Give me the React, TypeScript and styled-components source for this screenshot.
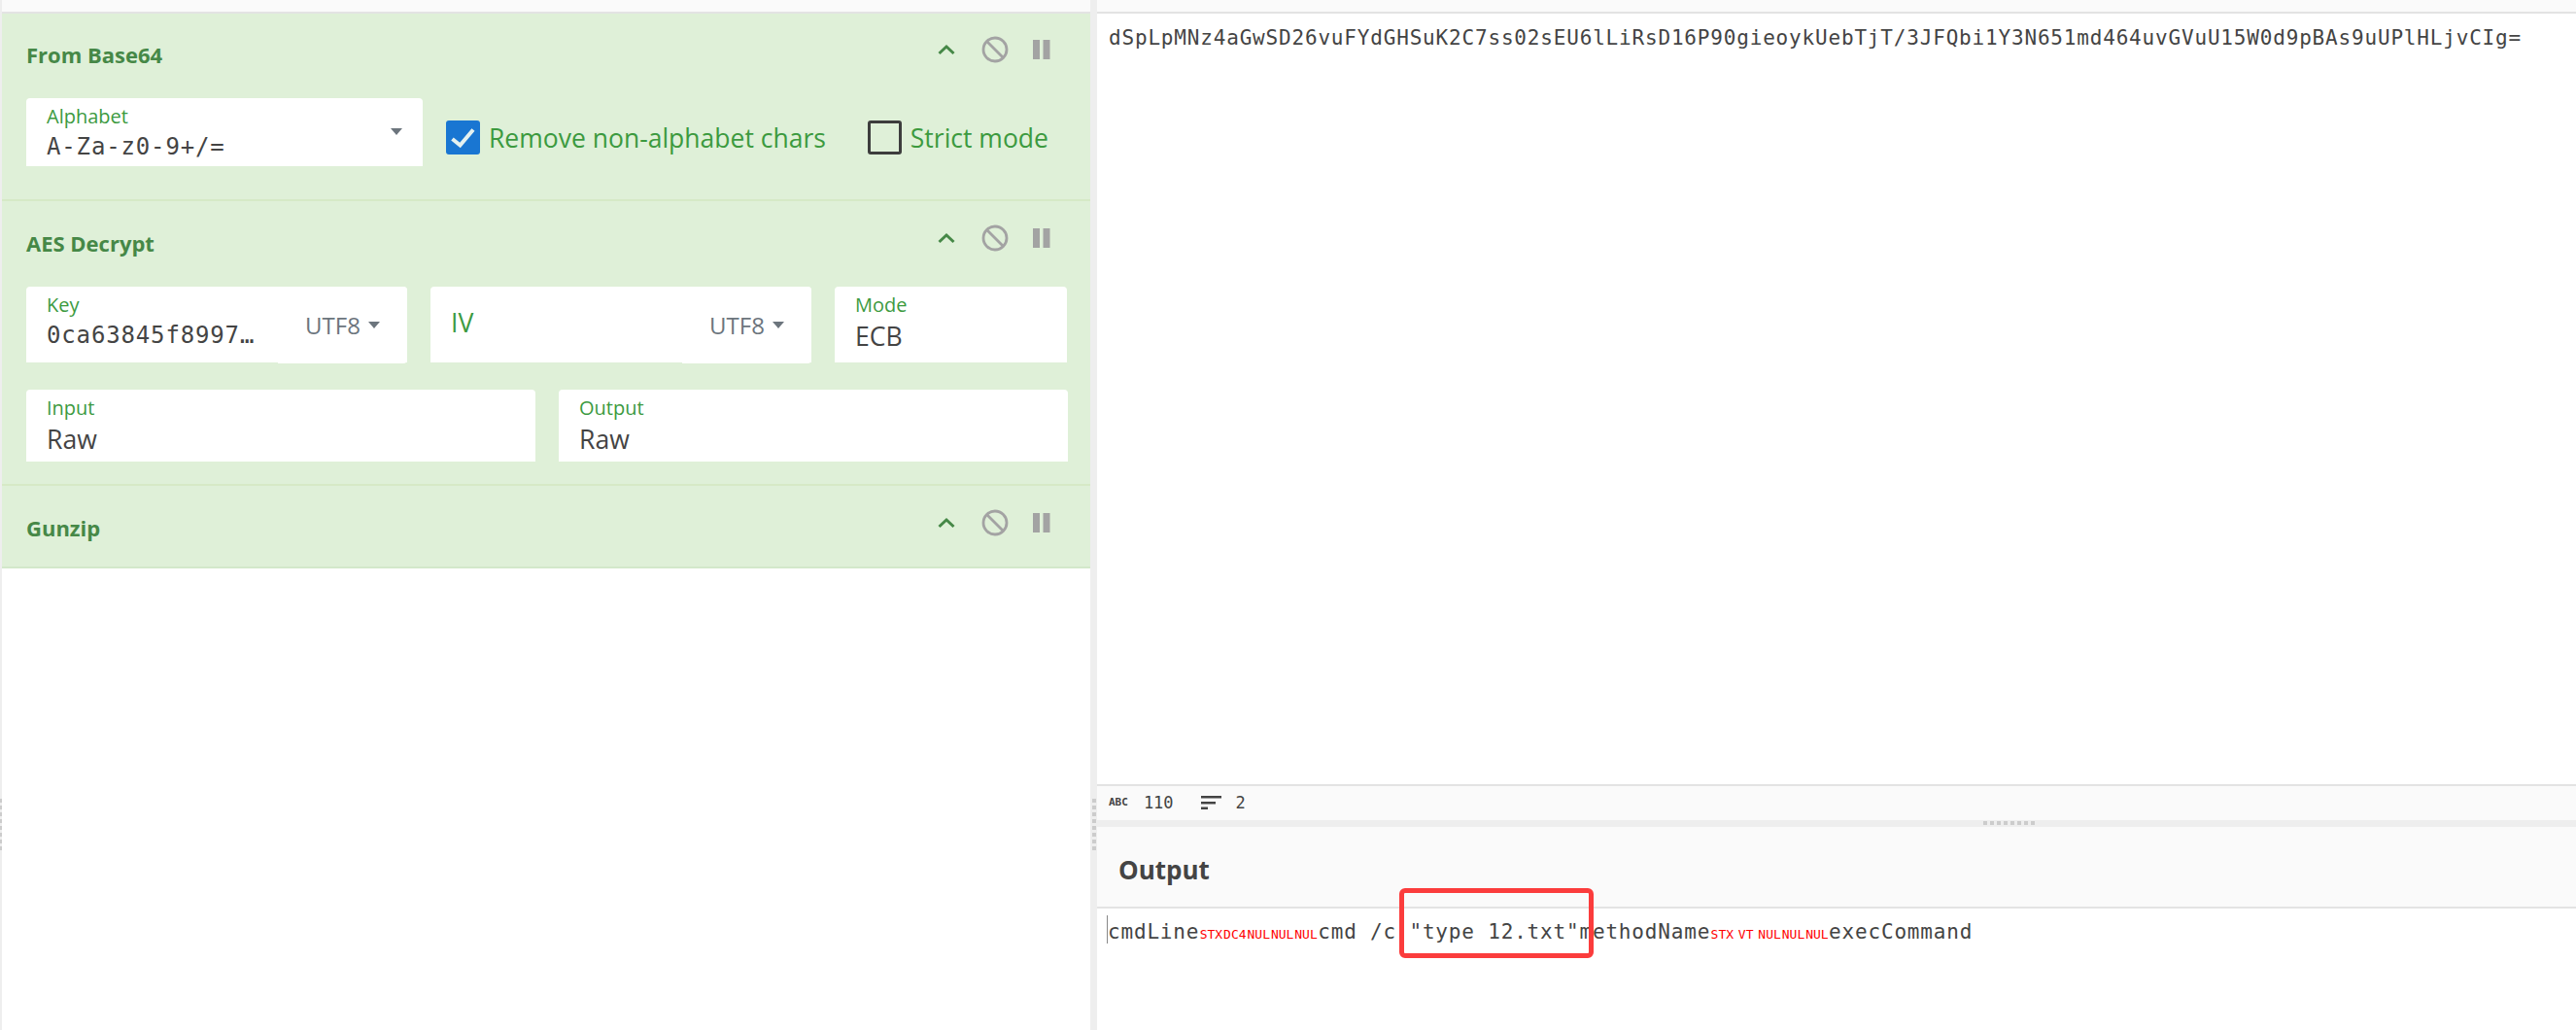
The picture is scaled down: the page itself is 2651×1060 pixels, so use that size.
import React from "react";
import styled, { createGlobalStyle } from "styled-components";

const GlobalStyle = createGlobalStyle`
  html, body {
    margin: 0;
    padding: 0;
    background: #fff;
    overflow: hidden;
  }
  * {
    box-sizing: border-box;
  }
`;

const green = "#468847";
const labelGreen = "#3c9a3f";
const ink = "#444";
const sans = `"Open Sans", "Noto Sans", sans-serif`;
const mono = `"DejaVu Sans Mono", "Liberation Mono", monospace`;

const Page = styled.div`
  position: relative;
  width: 2651px;
  height: 1060px;
  display: flex;
  font-family: ${sans};
  color: ${ink};
  overflow: hidden;
`;

const EdgeGutter = styled.div`
  position: relative;
  width: 2px;
  flex: none;
  background: #eee;
`;

const RecipePane = styled.div`
  width: 1120px;
  flex: none;
  display: flex;
  flex-direction: column;
`;

const TopStrip = styled.div`
  height: 14px;
  flex: none;
  background: #fafafa;
  border-bottom: 2px solid #e3e3e3;
`;

const Operation = styled.section<{ $h: number; $last?: boolean }>`
  height: ${(p) => p.$h}px;
  flex: none;
  padding: 0 23px 0 25px;
  background: #dff0d8;
  border-bottom: 2px solid ${(p) => (p.$last ? "#d3e8ca" : "#d6e9c6")};
`;

const OpHeader = styled.div<{ $first?: boolean }>`
  height: ${(p) => (p.$first ? 87 : 88)}px;
  margin-top: 0;
  display: flex;
  align-items: flex-start;
  justify-content: space-between;
`;

const OpTitle = styled.h3<{ $first?: boolean }>`
  margin: ${(p) => (p.$first ? 27 : 28)}px 0 0;
  font-size: 22px;
  line-height: 30px;
  font-weight: 700;
  color: ${green};
`;

const OpControls = styled.div<{ $first?: boolean }>`
  display: flex;
  align-items: center;
  justify-content: space-between;
  width: 117px;
  height: 30px;
  margin: ${(p) => (p.$first ? 22 : 23)}px 18px 0 0;
`;

const Row = styled.div<{ $mb?: number }>`
  display: flex;
  align-items: center;
  gap: 24px;
  margin-bottom: ${(p) => p.$mb ?? 0}px;
`;

const Field = styled.div<{ $w: number; $h: number }>`
  position: relative;
  width: ${(p) => p.$w}px;
  height: ${(p) => p.$h}px;
  flex: none;
  background: #fff;
  border-radius: 4px 4px 0 0;
  padding: 7px 21px 0;
`;

const FieldLabel = styled.div`
  font-size: 20px;
  line-height: 24px;
  color: ${labelGreen};
`;

const FieldValue = styled.div<{ $mono?: boolean }>`
  margin-top: ${(p) => (p.$mono ? 3 : 4)}px;
  font-family: ${(p) => (p.$mono ? mono : sans)};
  font-size: ${(p) => (p.$mono ? 24 : 26.6)}px;
  letter-spacing: ${(p) => (p.$mono ? 0.85 : 0)}px;
  line-height: 32px;
  color: ${ink};
  white-space: nowrap;
`;

const BigLabel = styled.div`
  font-size: 26.6px;
  line-height: 32px;
  margin-top: 14px;
  color: ${labelGreen};
`;

const Caret = styled.span`
  display: inline-block;
  border-top: 7px solid #6c757d;
  border-left: 6.5px solid transparent;
  border-right: 6.5px solid transparent;
`;

const SelectCaret = styled(Caret)`
  position: absolute;
  right: 21px;
  top: 31px;
`;

const Encoding = styled.div`
  position: absolute;
  right: 0;
  top: 0;
  bottom: -1px;
  width: 133px;
  background: #fff;
  border-radius: 0 4px 4px 0;
  display: flex;
  align-items: center;
  justify-content: center;
  gap: 8px;
  font-size: 24px;
  color: #6c757d;
`;

const CheckGroup = styled.label<{ $ml?: number }>`
  display: flex;
  align-items: center;
  gap: 9px;
  padding-top: 11px;
  margin-left: ${(p) => p.$ml ?? 0}px;
  font-size: 26.5px;
  color: ${labelGreen};
  white-space: nowrap;
`;

const CheckBox = styled.span<{ $on?: boolean }>`
  width: 35px;
  height: 35px;
  flex: none;
  display: flex;
  border-radius: 3px;
  background: ${(p) => (p.$on ? "#1976d2" : "transparent")};
  border: ${(p) => (p.$on ? "none" : "3px solid #3d3d3d")};
`;

const Gutter = styled.div`
  position: relative;
  width: 7px;
  flex: none;
  background: #eee;
`;

const MainPane = styled.div`
  flex: 1;
  display: flex;
  flex-direction: column;
  min-width: 0;
`;

const InputBody = styled.div`
  height: 793px;
  flex: none;
  padding: 12px 12px;
  font-family: ${mono};
  font-size: 21px;
  letter-spacing: 0.82px;
  line-height: 26px;
  color: ${ink};
  white-space: nowrap;
`;

const StatusBar = styled.div`
  height: 37px;
  flex: none;
  display: flex;
  align-items: center;
  padding: 0 0 2px 12px;
  background: #fafafa;
  border-top: 2px solid #e3e3e3;
  font-family: ${mono};
  font-size: 17px;
  color: ${ink};
`;

const StatGroup = styled.span<{ $gap: number; $mr?: number }>`
  display: flex;
  align-items: center;
  gap: ${(p) => p.$gap}px;
  margin-right: ${(p) => p.$mr ?? 0}px;
`;

const AbcMark = styled.span`
  font-size: 11px;
  font-weight: 700;
`;

const HSplit = styled.div`
  position: relative;
  height: 7px;
  flex: none;
  background: #eee;
`;

const Grip = styled.div<{ $w?: number }>`
  position: absolute;
  left: ${(p) => (p.$w === 2 ? 0 : 2)}px;
  top: 822px;
  width: ${(p) => p.$w ?? 4}px;
  height: 56px;
  background: repeating-linear-gradient(to bottom, #ccc 0 4px, transparent 4px 7px);
`;

const SplitGrip = styled.div`
  position: absolute;
  left: 912px;
  top: 1px;
  width: 54px;
  height: 4px;
  background: repeating-linear-gradient(to right, #ccc 0 4px, transparent 4px 7px);
`;

const OutputHeader = styled.div`
  height: 84px;
  flex: none;
  display: flex;
  align-items: center;
  padding: 6px 0 0 22px;
  background: #fafafa;
  border-bottom: 2px solid #e3e3e3;
  font-size: 26px;
  font-weight: 700;
  color: ${ink};
`;

const OutputBody = styled.div`
  flex: 1;
  position: relative;
  padding: 10px 11px;
  font-family: ${mono};
  font-size: 21px;
  letter-spacing: 0.82px;
  line-height: 28px;
  color: ${ink};
  white-space: pre;
`;

const Cursor = styled.span`
  position: absolute;
  left: 10px;
  top: 7px;
  width: 1px;
  height: 29px;
  background: #888;
`;

const Ctrl = styled.span`
  display: inline-block;
  width: 24.4px;
  text-align: center;
  letter-spacing: 0;
  font-size: 13px;
  color: #f00;
`;

const Annotation = styled.div`
  position: absolute;
  left: 1440px;
  top: 914px;
  width: 200px;
  height: 72px;
  border: 5px solid #fb3c3c;
  border-radius: 6px;
  pointer-events: none;
`;

const ChevronUp = () => (
  <svg width="20" height="12" viewBox="0 0 20 12" fill="none">
    <path d="M2.500 10 10 3l7.500 7" stroke={green} strokeWidth="3" />
  </svg>
);

const BanIcon = () => (
  <svg width="30" height="30" viewBox="0 0 30 30" fill="none">
    <circle cx="15" cy="15" r="12" stroke="#a3a3a3" strokeWidth="2.800" />
    <path d="M6.500 6.500 23.500 23.500" stroke="#a3a3a3" strokeWidth="2.800" />
  </svg>
);

const PauseIcon = () => (
  <svg width="18" height="20" viewBox="0 0 18 20">
    <path d="M0 0h7v20H0zM10.500 0h7v20h-7z" fill="#a3a3a3" />
  </svg>
);

const Controls: React.FC<{ first?: boolean }> = ({ first }) => (
  <OpControls $first={first}>
    <ChevronUp />
    <BanIcon />
    <PauseIcon />
  </OpControls>
);

const CheckMark = () => (
  <svg width="35" height="35" viewBox="0 0 35 35" fill="none">
    <path d="M6.500 19l8 6.500L28 9.500" stroke="#e4f1f0" strokeWidth="4" />
  </svg>
);

const SortLines = () => (
  <svg width="21" height="14" viewBox="0 0 21 14">
    <path d="M0 0h21v2.500H0zM0 6h15v2.500H0zM0 11.500h7V14H0z" fill="#444" />
  </svg>
);

const controlCodes = (codes: string[]) => codes.map((c, i) => <Ctrl key={i}>{c}</Ctrl>);

const App: React.FC = () => {
  return (
    <>
      <GlobalStyle />
      <Page>
        <EdgeGutter>
          <Grip $w={2} />
        </EdgeGutter>
        <RecipePane>
          <TopStrip />
          <Operation $h={193}>
            <OpHeader $first>
              <OpTitle $first>From Base64</OpTitle>
              <Controls first />
            </OpHeader>
            <Row>
              <Field $w={408} $h={70}>
                <FieldLabel>Alphabet</FieldLabel>
                <FieldValue $mono>A-Za-z0-9+/=</FieldValue>
                <SelectCaret />
              </Field>
              <CheckGroup>
                <CheckBox $on>
                  <CheckMark />
                </CheckBox>
                Remove non-alphabet chars
              </CheckGroup>
              <CheckGroup $ml={19}>
                <CheckBox />
                Strict mode
              </CheckGroup>
            </Row>
          </Operation>
          <Operation $h={293}>
            <OpHeader>
              <OpTitle>AES Decrypt</OpTitle>
              <Controls />
            </OpHeader>
            <Row $mb={28}>
              <Field $w={392} $h={78}>
                <FieldLabel>Key</FieldLabel>
                <FieldValue $mono>0ca63845f8997…</FieldValue>
                <Encoding>
                  UTF8
                  <Caret />
                </Encoding>
              </Field>
              <Field $w={392} $h={78}>
                <BigLabel>IV</BigLabel>
                <Encoding>
                  UTF8
                  <Caret />
                </Encoding>
              </Field>
              <Field $w={239} $h={78}>
                <FieldLabel>Mode</FieldLabel>
                <FieldValue>ECB</FieldValue>
              </Field>
            </Row>
            <Row>
              <Field $w={524} $h={74}>
                <FieldLabel>Input</FieldLabel>
                <FieldValue>Raw</FieldValue>
              </Field>
              <Field $w={524} $h={74}>
                <FieldLabel>Output</FieldLabel>
                <FieldValue>Raw</FieldValue>
              </Field>
            </Row>
          </Operation>
          <Operation $h={85} $last>
            <OpHeader>
              <OpTitle>Gunzip</OpTitle>
              <Controls />
            </OpHeader>
          </Operation>
        </RecipePane>
        <Gutter>
          <Grip />
        </Gutter>
        <MainPane>
          <TopStrip />
          <InputBody>
            dSpLpMNz4aGwSD26vuFYdGHSuK2C7ss02sEU6lLiRsD16P90gieoykUebTjT/3JFQbi1Y3N651md464uvGVuU15W0d9pBAs9uUPlHLjvCIg=
          </InputBody>
          <StatusBar>
            <StatGroup $gap={16} $mr={28}>
              <AbcMark>ABC</AbcMark>
              110
            </StatGroup>
            <StatGroup $gap={15}>
              <SortLines />2
            </StatGroup>
          </StatusBar>
          <HSplit>
            <SplitGrip />
          </HSplit>
          <OutputHeader>Output</OutputHeader>
          <OutputBody>
            <Cursor />
            cmdLine
            {controlCodes(["STX", "DC4", "NUL", "NUL", "NUL"])}
            {'cmd /c "type 12.txt"methodName'}
            {controlCodes(["STX", "VT", "NUL", "NUL", "NUL"])}
            execCommand
          </OutputBody>
        </MainPane>
        <Annotation />
      </Page>
    </>
  );
};

export default App;
